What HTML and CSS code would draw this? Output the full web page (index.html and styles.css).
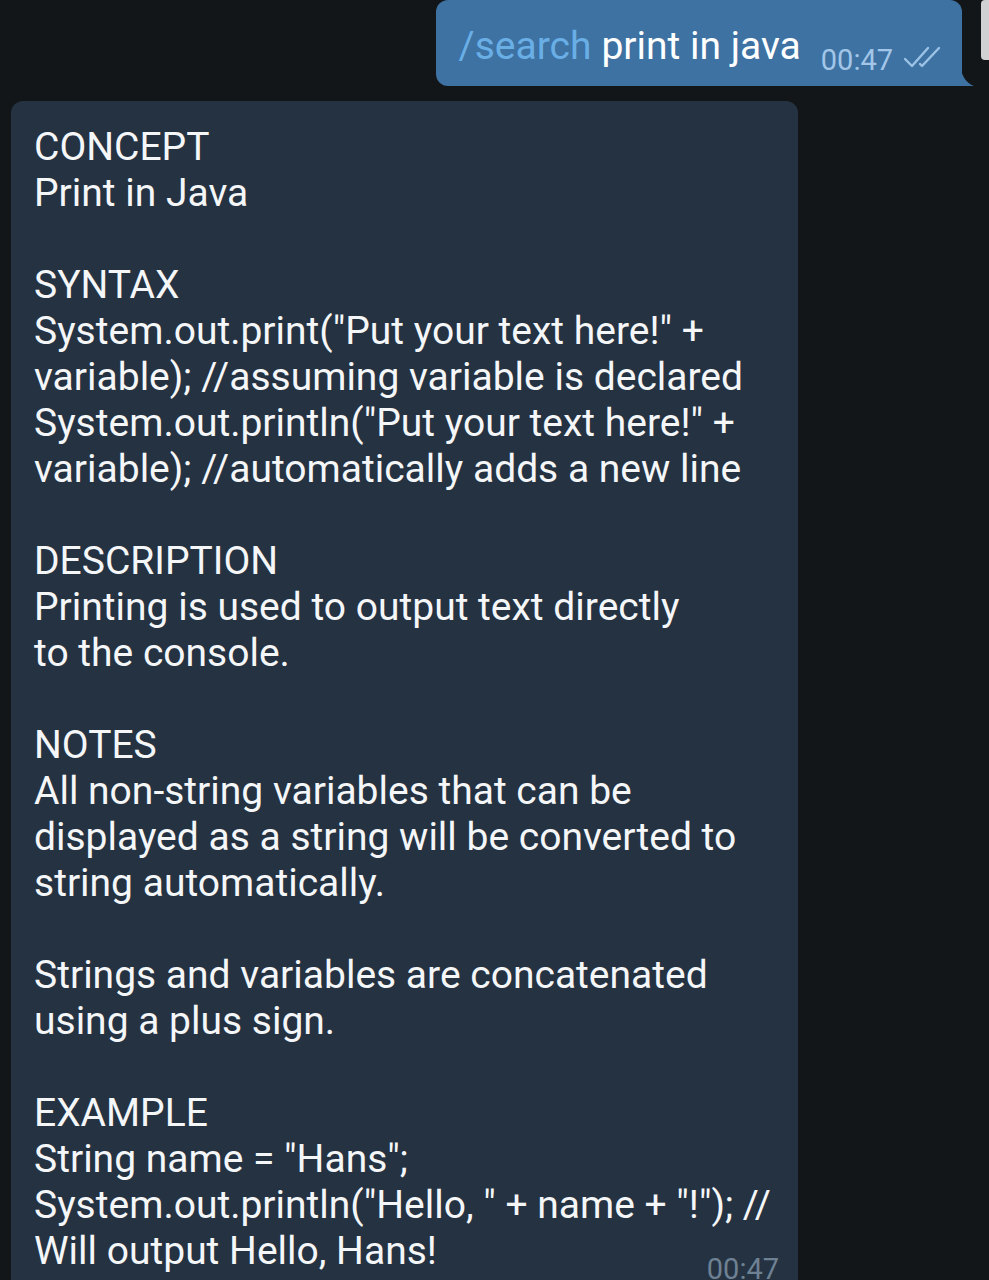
FILE: index.html
```html
<!DOCTYPE html>
<html>
<head>
<meta charset="utf-8">
<link rel="stylesheet" href="styles.css">
</head>
<body>
<div class="chat">
  <div class="row out">
    <div class="bubble-out">
      <span class="cmd">/search</span> <span class="msg">print in java</span>
      <span class="meta"><span class="time-out">00:47</span>
        <svg class="checks" width="40" height="26" viewBox="0 0 40 26">
          <path d="M2 14 L9 21 L25 3" fill="none" stroke="#9cc2e6" stroke-width="2.4" stroke-linecap="round" stroke-linejoin="round"/>
          <path d="M17 19 L19 21 L36 3" fill="none" stroke="#9cc2e6" stroke-width="2.4" stroke-linecap="round" stroke-linejoin="round"/>
        </svg>
      </span>
      <svg class="tail" width="16" height="20" viewBox="0 0 16 20"><path d="M0 0 C2 10 6 17 14 20 L0 20 Z" fill="#3d72a3"/></svg>
    </div>
  </div>
  <div class="row in">
    <div class="bubble-in">
      <div class="text">CONCEPT
Print in Java

SYNTAX
System.out.print("Put your text here!" +
variable); //assuming variable is declared
System.out.println("Put your text here!" +
variable); //automatically adds a new line

DESCRIPTION
Printing is used to output text directly
to the console.

NOTES
All non-string variables that can be
displayed as a string will be converted to
string automatically.

Strings and variables are concatenated
using a plus sign.

EXAMPLE
String name = "Hans";
System.out.println("Hello, " + name + "!"); //</div>
      <div class="last">
        <span class="text">Will output Hello, Hans!</span>
        <span class="time-in">00:47</span>
      </div>
    </div>
  </div>
  <div class="scroll"></div>
</div>
</body>
</html>
```

FILE: styles.css
```css
html, body {
  margin: 0;
  padding: 0;
  background: #131618;
  height: 1280px;
  overflow: hidden;
}
.chat {
  font-family: Roboto, "Noto Sans", sans-serif;
  position: relative;
  width: 989px;
  height: 1280px;
}
.row {
  display: flex;
}
.row.out {
  justify-content: flex-end;
  padding-right: 27px;
}
.bubble-out {
  position: relative;
  background: #3d72a3;
  border-radius: 12px 12px 0 12px;
  height: 86px;
  box-sizing: border-box;
  padding: 5px 19px 0 23px;
  display: flex;
  align-items: center;
  color: #ffffff;
  font-size: 39px;
}
.cmd {
  color: #6aaee6;
}
.msg {
  margin-left: 10px;
}
.meta {
  display: flex;
  align-items: center;
  margin-left: 20px;
  margin-top: 28px;
}
.time-out {
  color: #a3c6e8;
  font-size: 29px;
}
.checks {
  margin-left: 10px;
  margin-top: -4px;
}
.tail {
  position: absolute;
  right: -14px;
  bottom: 0;
}
.row.in {
  padding-left: 11px;
  margin-top: 15px;
}
.bubble-in {
  width: 787px;
  box-sizing: border-box;
  background: #243242;
  border-radius: 12px;
  padding: 23px 19px 12px 23px;
  height: 1300px;
}
.text {
  white-space: pre-line;
  color: #f4f6f8;
  font-size: 39px;
  line-height: 46px;
}
.last {
  display: flex;
  justify-content: space-between;
  align-items: flex-end;
}
.time-in {
  color: #6e8193;
  font-size: 29px;
  line-height: 34px;
  margin-bottom: -12px;
}
.scroll {
  position: absolute;
  right: 0;
  top: 0;
  width: 8px;
  height: 60px;
  background: #cfd1d2;
  border-radius: 4px 0 0 4px;
}
```
